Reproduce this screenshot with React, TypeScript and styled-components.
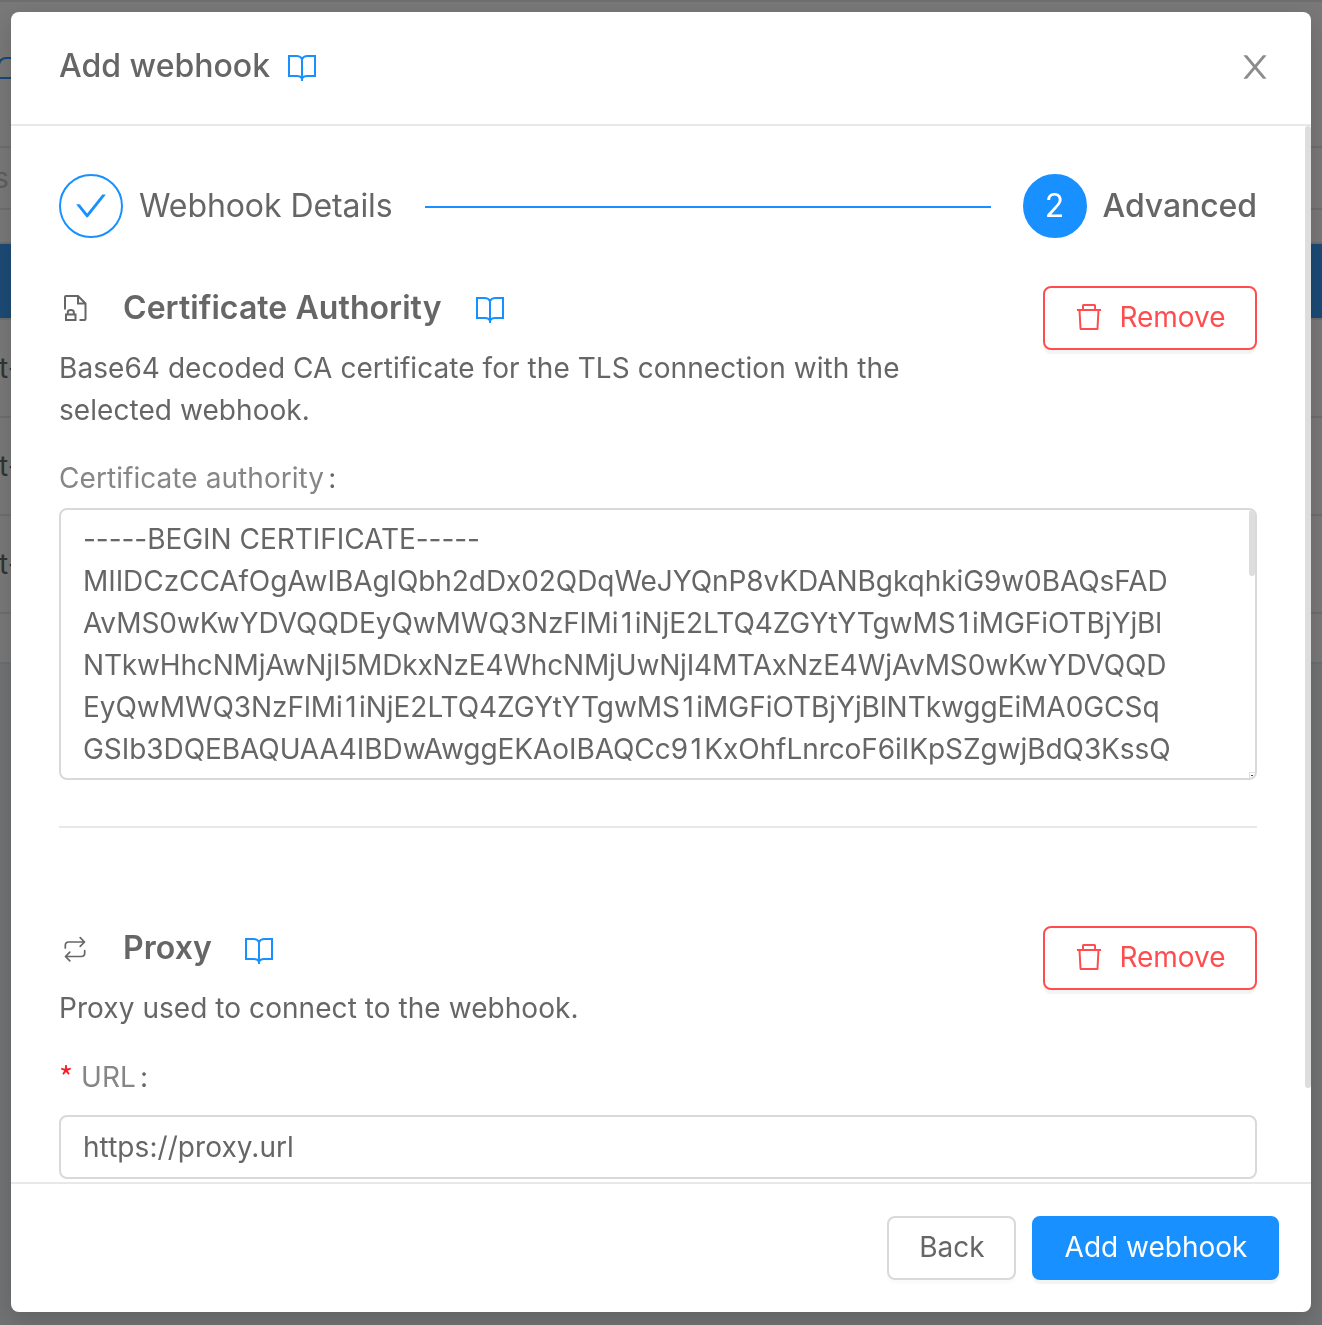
import React from "react";
import styled, { createGlobalStyle, css } from "styled-components";

const Global = createGlobalStyle`
  *, *::before, *::after { box-sizing: border-box; }
  body {
    margin: 0;
    overflow: hidden;
    font-family: Inter, "Liberation Sans", sans-serif;
    font-size: 28px;
    line-height: 42px;
    letter-spacing: 0.06px;
    color: #666;
    background: #e1e4e8;
  }
`;

const Page = styled.div`
  width: 1322px;
  height: 1325px;
  overflow: hidden;
  display: flex;
  flex-direction: column;
`;

const Row = styled.div<{ $h: number; $bg?: string; $line?: string; $color?: string }>`
  flex: none;
  height: ${(p) => p.$h}px;
  background: ${(p) => p.$bg || "#f0f0f0"};
  border-bottom: 2px solid ${(p) => p.$line || "#dcdcdc"};
  color: ${(p) => p.$color || "#666"};
  display: flex;
  align-items: center;
  overflow: hidden;
`;

const CellText = styled.span<{ $shift?: number }>`
  margin: 0 0 0 ${(p) => p.$shift ?? -1}px;
`;

const PageTab = styled.div`
  width: 60px;
  height: 22px;
  margin-left: -2px;
  margin-top: -12px;
  border: 2px solid #3090ef;
  border-right: 0;
  border-bottom: 0;
  border-radius: 8px 0 0 0;
  display: flex;
  align-items: flex-end;
`;

const PageTabInner = styled.div`
  width: 60px;
  height: 2px;
  background: #3090ef;
`;

const Backdrop = styled.div`
  position: fixed;
  inset: 0;
  background: rgba(0, 0, 0, 0.5);
  padding: 12px 11px 13px;
`;

const Modal = styled.div`
  height: 1300px;
  display: flex;
  flex-direction: column;
  background: #fff;
  border-radius: 8px;
  box-shadow: 0 8px 24px rgba(0, 0, 0, 0.15);
  overflow: hidden;
`;

const Header = styled.header`
  height: 114px;
  flex: none;
  display: flex;
  align-items: center;
  padding: 0 40px 4px 48px;
  border-bottom: 2px solid #e8e8e8;
`;

const Title = styled.h1`
  margin: 0;
  font-size: 32px;
  font-weight: 500;
  line-height: 44px;
  letter-spacing: 0.02px;
`;

const Spacer = styled.div`
  flex: 1;
`;

const IconSlot = styled.span<{ $ml?: number; $mt?: number }>`
  display: inline-flex;
  flex: none;
  margin-left: ${(p) => p.$ml || 0}px;
  margin-top: ${(p) => p.$mt || 0}px;
`;

const Body = styled.div`
  flex: 1;
  min-height: 0;
  display: flex;
  overflow: hidden;
`;

const Content = styled.div`
  width: 1294px;
  flex: none;
  padding: 48px 48px 0;
`;

const ScrollThumb = styled.div`
  width: 6px;
  height: 962px;
  border-radius: 3px;
  background: #ddd;
`;

const Steps = styled.div`
  display: flex;
  align-items: center;
  height: 64px;
  font-size: 32px;
  letter-spacing: -0.08px;
`;

const StepDot = styled.span<{ $active?: boolean }>`
  flex: none;
  width: 64px;
  height: 64px;
  margin-right: 16px;
  border-radius: 50%;
  border: 2px solid #1890ff;
  background: ${(p) => (p.$active ? "#1890ff" : "#fff")};
  color: #fff;
  display: flex;
  align-items: center;
  justify-content: center;
`;

const StepLabel = styled.span<{ $active?: boolean }>`
  font-weight: ${(p) => (p.$active ? 500 : 400)};
  white-space: nowrap;
`;

const StepLine = styled.span`
  flex: 1;
  height: 2px;
  margin: 2px 32px 0;
  background: #1890ff;
`;

const Section = styled.section<{ $mt: number }>`
  margin-top: ${(p) => p.$mt}px;
  display: flex;
  align-items: flex-start;
`;

const SectionInfo = styled.div`
  width: 880px;
`;

const SectionHead = styled.div`
  display: flex;
  align-items: center;
  height: 44px;
`;

const SectionIcon = styled.span`
  width: 64px;
  display: flex;
`;

const SectionTitle = styled.h2`
  margin: 0;
  font-size: 32px;
  font-weight: 600;
  line-height: 44px;
  letter-spacing: 0.06px;
`;

const Description = styled.p`
  margin: 17px 0 0;
`;

const buttonBase = css`
  height: 64px;
  flex: none;
  display: flex;
  align-items: center;
  justify-content: center;
  padding: 0 0 2px 1px;
  border-radius: 8px;
  font: inherit;
  letter-spacing: 0;
  box-shadow: 0 4px 0 rgba(0, 0, 0, 0.045);
`;

const DangerButton = styled.button`
  ${buttonBase}
  width: 214px;
  gap: 16px;
  margin-left: auto;
  background: #fff;
  border: 2px solid #ff4d4f;
  color: #ff4d4f;
`;

const BackButton = styled.button`
  ${buttonBase}
  width: 129px;
  background: #fff;
  border: 2px solid #d9d9d9;
  color: #666;
  box-shadow: 0 4px 0 rgba(0, 0, 0, 0.015);
`;

const PrimaryButton = styled.button`
  ${buttonBase}
  width: 247px;
  background: #1890ff;
  border: 2px solid #1890ff;
  color: #fff;
`;

const Label = styled.label<{ $mt: number }>`
  display: flex;
  height: 42px;
  margin-top: ${(p) => p.$mt}px;
  color: #868686;
`;

const Colon = styled.span`
  margin-left: 4px;
  color: #666;
`;

const Star = styled.span`
  width: 22px;
  color: #f5222d;
  font-family: "Noto Sans CJK SC", sans-serif;
  font-size: 30px;
  line-height: 40px;
`;

const CertBox = styled.div`
  height: 272px;
  margin-top: 9px;
  border: 2px solid #d9d9d9;
  border-radius: 8px;
  display: flex;
  justify-content: space-between;
  overflow: hidden;
`;

const CertText = styled.div`
  padding: 8px 0 0 22px;
`;

const CertLine = styled.div<{ $spacing: number }>`
  height: 42px;
  white-space: nowrap;
  letter-spacing: ${(p) => p.$spacing}px;
`;

const DigitOne = styled.span`
  margin: 0 2.5px;
`;

const CertRail = styled.div`
  display: flex;
  flex-direction: column;
  justify-content: space-between;
`;

const CertThumb = styled.span`
  width: 6px;
  height: 66px;
  border-radius: 3px;
  background: #ddd;
`;

const Divider = styled.hr`
  margin: 46px 0 0;
  border: 0;
  height: 2px;
  background: #e8e8e8;
`;

const Field = styled.div`
  height: 64px;
  margin-top: 17px;
  padding: 0 22px;
  border: 2px solid #d9d9d9;
  border-radius: 8px;
  display: flex;
  align-items: center;
`;

const Footer = styled.footer`
  height: 130px;
  flex: none;
  border-top: 2px solid #e8e8e8;
  padding: 32px;
  display: flex;
  justify-content: flex-end;
  gap: 16px;
`;

const Book = () => (
  <svg width="30" height="28" viewBox="0 0 30 28" fill="none" stroke="#1890ff" strokeWidth="2">
    <path d="M15 5C14 3 12 2 9.500 2H2v20h8c2.500 0 4 .6 5 2.500 1-1.900 2.500-2.500 5-2.500h8V2h-7.500C18 2 16 3 15 5Z" />
    <path d="M15 4v23" />
  </svg>
);

const Check = () => (
  <svg width="32" height="32" viewBox="64 64 896 896" fill="#1890ff">
    <path d="M912 190h-69.900c-9.800 0-19.100 4.500-25.100 12.200L404.700 724.500 207 474a32 32 0 0 0-25.100-12.200H112c-6.700 0-10.400 7.700-6.300 12.900l273.900 347c12.800 16.200 37.400 16.200 50.300 0l488.400-618.900c4.100-5.100.4-12.800-6.300-12.800z" />
  </svg>
);

const Close = () => (
  <svg width="32" height="32" viewBox="64 64 896 896" fill="#8c8c8c">
    <path d="M563.800 512l262.500-312.900c4.400-5.200.7-13.100-6.100-13.100h-79.800c-4.700 0-9.200 2.100-12.300 5.700L511.600 449.800 295.100 191.700c-3-3.600-7.500-5.700-12.300-5.700H203c-6.800 0-10.500 7.900-6.100 13.100L459.400 512 196.900 824.900A7.950 7.950 0 0 0 203 838h79.800c4.700 0 9.200-2.100 12.300-5.700l216.500-258.100 216.500 258.100c3 3.600 7.500 5.700 12.300 5.700h79.800c6.800 0 10.500-7.900 6.100-13.100L563.800 512z" />
  </svg>
);

const Trash = () => (
  <svg width="28" height="28" viewBox="0 0 28 28" fill="none" stroke="#ff4d4f" strokeWidth="2" strokeLinejoin="round">
    <path d="M2 7h24M8 7V2.500Q8 2 8.500 2h11q.5 0 .5.500V7M4.500 7l1 18.500q0 .5.500.5h16q.5 0 .5-.5l1-18.500" />
  </svg>
);

const FileLock = () => (
  <svg width="32" height="32" viewBox="0 0 32 32" fill="none" stroke="#666" strokeWidth="2">
    <path d="M6 17.500V5q0-1 1-1h12l7.500 7.500V27q0 1-1 1h-5M19 4v7.500h7.500" />
    <path d="M7 22.500h9.500V28H7zM8.800 22v-2q0-2 3-2t3 2v2" />
  </svg>
);

const Swap = () => (
  <svg width="32" height="32" viewBox="0 0 32 32" fill="none" stroke="#666" strokeWidth="1.700" strokeLinecap="round" strokeLinejoin="round">
    <path d="M6.300 16v-2.500q0-3.500 3.500-3.500H25.500M21.200 5.700l4.300 4.300-4.300 4.300M25.700 18.500V21q0 3.500-3.500 3.500H6.500M10.800 20.200l-4.300 4.300 4.300 4.300" />
  </svg>
);

const Grip = () => (
  <svg width="6" height="6" viewBox="0 0 6 6">
    <path d="M0 0h6v1H1v5H0z" fill="#ddd" />
    <path d="M2 3h2v1H2z" fill="#444" />
  </svg>
);

const certificate: { text: string; spacing: number }[] = [
  { text: "-----BEGIN CERTIFICATE-----", spacing: -0.04 },
  { text: "MIIDCzCCAfOgAwIBAgIQbh2dDx02QDqWeJYQnP8vKDANBgkqhkiG9w0BAQsFAD", spacing: -0.07 },
  { text: "AvMS0wKwYDVQQDEyQwMWQ3NzFlMi1iNjE2LTQ4ZGYtYTgwMS1iMGFiOTBjYjBl", spacing: -0.06 },
  { text: "NTkwHhcNMjAwNjI5MDkxNzE4WhcNMjUwNjI4MTAxNzE4WjAvMS0wKwYDVQQD", spacing: -0.165 },
  { text: "EyQwMWQ3NzFlMi1iNjE2LTQ4ZGYtYTgwMS1iMGFiOTBjYjBlNTkwggEiMA0GCSq", spacing: -0.05 },
  { text: "GSIb3DQEBAQUAA4IBDwAwggEKAoIBAQCc91KxOhfLnrcoF6iIKpSZgwjBdQ3KssQ", spacing: -0.065 },
];

const Certificate = () => (
  <CertText>
    {certificate.map(({ text, spacing }) => (
      <CertLine key={text} $spacing={spacing}>
        {text.split("1").map((part, i) => (
          <React.Fragment key={i}>
            {i > 0 && <DigitOne>1</DigitOne>}
            {part}
          </React.Fragment>
        ))}
      </CertLine>
    ))}
  </CertText>
);

export default function App() {
  return (
    <>
      <Global />
      <Page>
        <Row $h={2} />
        <Row $h={146}>
          <PageTab><PageTabInner /></PageTab>
        </Row>
        <Row $h={62} $color="#bbb"><CellText $shift={-6}>s</CellText></Row>
        <Row $h={34} />
        <Row $h={76} $bg="#3894ea" />
        <Row $h={98}><CellText>t-</CellText></Row>
        <Row $h={98}><CellText>t-</CellText></Row>
        <Row $h={98}><CellText>t-</CellText></Row>
        <Row $h={50} />
      </Page>
      <Backdrop>
        <Modal>
          <Header>
            <Title>Add webhook</Title>
            <IconSlot $ml={17} $mt={4}><Book /></IconSlot>
            <Spacer />
            <IconSlot $mt={2}><Close /></IconSlot>
          </Header>
          <Body>
            <Content>
              <Steps>
                <StepDot><Check /></StepDot>
                <StepLabel>Webhook Details</StepLabel>
                <StepLine />
                <StepDot $active>2</StepDot>
                <StepLabel $active>Advanced</StepLabel>
              </Steps>
              <Section $mt={48}>
                <SectionInfo>
                  <SectionHead>
                    <SectionIcon><FileLock /></SectionIcon>
                    <SectionTitle>Certificate Authority</SectionTitle>
                    <IconSlot $ml={33} $mt={4}><Book /></IconSlot>
                  </SectionHead>
                  <Description>Base64 decoded CA certificate for the TLS connection with the selected webhook.</Description>
                </SectionInfo>
                <DangerButton><Trash />Remove</DangerButton>
              </Section>
              <Label $mt={26}>Certificate authority<Colon>:</Colon></Label>
              <CertBox>
                <Certificate />
                <CertRail><CertThumb /><Grip /></CertRail>
              </CertBox>
              <Divider />
              <Section $mt={98}>
                <SectionInfo>
                  <SectionHead>
                    <SectionIcon><Swap /></SectionIcon>
                    <SectionTitle>Proxy</SectionTitle>
                    <IconSlot $ml={32} $mt={6}><Book /></IconSlot>
                  </SectionHead>
                  <Description>Proxy used to connect to the webhook.</Description>
                </SectionInfo>
                <DangerButton><Trash />Remove</DangerButton>
              </Section>
              <Label $mt={27}><Star>*</Star>URL<Colon>:</Colon></Label>
              <Field>https://proxy.url</Field>
            </Content>
            <ScrollThumb />
          </Body>
          <Footer>
            <BackButton>Back</BackButton>
            <PrimaryButton>Add webhook</PrimaryButton>
          </Footer>
        </Modal>
      </Backdrop>
    </>
  );
}
